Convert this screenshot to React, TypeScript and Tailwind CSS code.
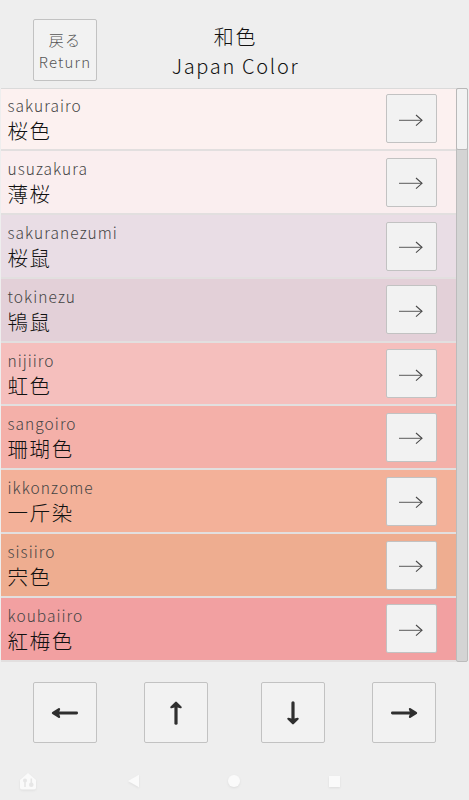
const colors = [
    { romaji: "sakurairo", name: "桜色", bg: "bg-[#fcf1f0]" },
    { romaji: "usuzakura", name: "薄桜", bg: "bg-[#faeeef]" },
    { romaji: "sakuranezumi", name: "桜鼠", bg: "bg-[#e9dde5]" },
    { romaji: "tokinezu", name: "鴇鼠", bg: "bg-[#e3d0d8]" },
    { romaji: "nijiiro", name: "虹色", bg: "bg-[#f5bfbd]" },
    { romaji: "sangoiro", name: "珊瑚色", bg: "bg-[#f4b0a9]" },
    { romaji: "ikkonzome", name: "一斤染", bg: "bg-[#f3b199]" },
    { romaji: "sisiiro", name: "宍色", bg: "bg-[#eead90]" },
    { romaji: "koubaiiro", name: "紅梅色", bg: "bg-[#f2a0a1]" },
];

const box = "flex items-center justify-center rounded-[2px] border border-[#c2c2c2] bg-[#f2f2f2]";

function ThinArrow() {
    return (
        <svg className="mt-0.5 mr-px" width="26" height="14" viewBox="0 0 26 14" fill="none" stroke="#4a4a4a">
            <path d="M1 7.3H24" strokeWidth="0.9" />
            <path d="M18 2L24 7.3L18 12.6" strokeWidth="1.1" />
        </svg>
    );
}

function HorizontalArrow({ turn = "" }: { turn?: string }) {
    return (
        <svg className={turn} width="28" height="28" viewBox="0 0 28 28" fill="#2f2f2f" stroke="#2f2f2f" strokeLinecap="round" strokeLinejoin="round">
            <path d="M2.4 14H23" strokeWidth="2.9" />
            <path d="M20 10.1L26 14L20 17.9L21.5 14Z" strokeWidth="2.3" />
        </svg>
    );
}

function VerticalArrow({ turn = "" }: { turn?: string }) {
    return (
        <svg className={turn} width="28" height="28" viewBox="0 0 28 28" fill="#2f2f2f" stroke="#2f2f2f" strokeLinecap="round" strokeLinejoin="round">
            <path d="M14 24.2V6" strokeWidth="3.2" />
            <path d="M9.4 8.2L14 3.7L18.6 8.2L14 7Z" strokeWidth="2.3" />
        </svg>
    );
}

export default function App() {
    return (
        <main className="flex h-[800px] w-[469px] flex-col overflow-hidden bg-[#eeeeee] font-['Noto_Sans_CJK_JP',sans-serif] font-light text-[#222222]">
            {/* Header */}
            <header className="flex h-[87.5px] shrink-0 pl-[33px]">
                <button className={`${box} mt-[19px] h-[62px] w-[64px] flex-col pt-px text-[15px] leading-[22px] tracking-[1.2px] text-[#555555]`}>
                    <span>戻る</span>
                    <span>Return</span>
                </button>
                <h1 className="ml-[38px] w-[201px] pt-[22px] text-center text-[20px] leading-[29px] tracking-[1.7px] text-[#111111]">
                    和色
                    <br />
                    Japan Color
                </h1>
            </header>

            {/* Color list */}
            <section className="flex h-[574.5px] shrink-0 pl-px">
                <ul className="w-[456px]">
                    {colors.map((c) => (
                        <li key={c.romaji} className={`${c.bg} flex h-[63.8px] justify-between border-b-2 border-[#e2dfdf] pr-5 pl-[6.5px] first:border-t first:border-t-[#dadada] first:*:-mt-px`}>
                            <div className="pt-[5px]">
                                <p className="text-[15.5px] leading-[25px] tracking-[1.05px] text-[#444444]">{c.romaji}</p>
                                <p className="text-[20.5px] leading-[25px] tracking-[1.6px] text-[#111111]">{c.name}</p>
                            </div>
                            <div className="pt-[6.5px]">
                                <button className={`${box} h-[49px] w-[51px]`}>
                                    <ThinArrow />
                                </button>
                            </div>
                        </li>
                    ))}
                </ul>
                <div className="-ml-px h-[574px] w-[12px] rounded-[2px] border border-[#bcbcbc] bg-[#d4d4d4]">
                    <div className="-mx-px -mt-px h-[62px] rounded-[2px] border border-[#b8b8b8] bg-[#f2f2f2]" />
                </div>
            </section>

            {/* Direction pad */}
            <nav className="flex h-[100px] shrink-0 pt-5 pl-[33px]">
                <button className={`${box} h-[61px] w-[64px]`}>
                    <HorizontalArrow turn="rotate-180" />
                </button>
                <button className={`${box} ml-[47px] h-[61px] w-[64px]`}>
                    <VerticalArrow />
                </button>
                <button className={`${box} ml-[53px] h-[61px] w-[64px]`}>
                    <VerticalArrow turn="rotate-180" />
                </button>
                <button className={`${box} ml-[47px] h-[61px] w-[64px]`}>
                    <HorizontalArrow />
                </button>
            </nav>

            {/* System bar */}
            <footer className="flex h-[38px] items-center pl-5 drop-shadow-[0_1px_1px_rgba(0,0,0,0.07)]">
                <svg width="16" height="18" viewBox="0 0 16 18" fill="#fafafa">
                    <path d="M8 1L16 8V15.5Q16 17.5 14 17.5H2Q0 17.5 0 15.5V8Z" />
                    <circle cx="5" cy="8.5" r="2" fill="#e6e6e6" />
                    <circle cx="11.3" cy="12.7" r="2.3" fill="#e6e6e6" />
                    <path d="M5 8V15M11.3 6.5V13" stroke="#e6e6e6" strokeWidth="1.6" />
                </svg>
                <svg className="ml-[92px]" width="12" height="14" viewBox="0 0 12 14" fill="#fafafa">
                    <path d="M0 7L11 0.7V13.3Z" />
                </svg>
                <div className="ml-[88px] size-3 rounded-full bg-[#fafafa]" />
                <div className="ml-[89px] size-[11px] bg-[#fafafa]" />
            </footer>
        </main>
    );
}
